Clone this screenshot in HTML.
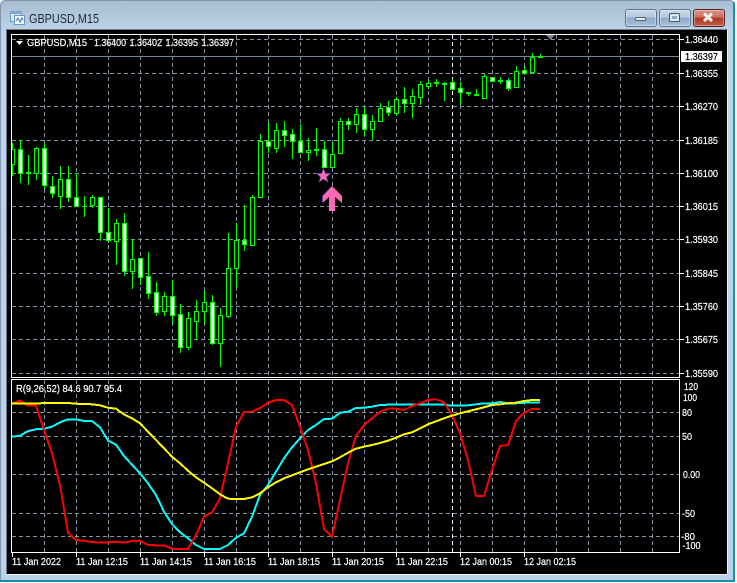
<!DOCTYPE html>
<html><head><meta charset="utf-8"><title>GBPUSD,M15</title>
<style>
html,body{margin:0;padding:0;background:#fff;width:737px;height:583px;overflow:hidden}
#win{position:absolute;left:0;top:0;width:735px;height:582px;background:linear-gradient(180deg,#a6bbd0 0,#b4cadf 18px,#bdd3ea 32px,#bad2ea 100%);border-radius:5px 5px 0 0;box-shadow:inset 0 0 0 1px #7f97ad}
#bot{position:absolute;left:0;top:580px;width:735px;height:2px;background:#1f8f9f}
#rgt{position:absolute;left:733px;top:2px;width:2px;height:580px;background:#1f8f9f}
#in{position:absolute;left:7px;top:30px;width:721px;height:545px;background:#000;box-shadow:inset -1px -1px 0 0 #f2f4f6,-1px -1px 0 0 #6d7a86}
.b{position:absolute;top:9px;height:16px;width:30px;border:1px solid #5d7690;border-radius:3px;background:linear-gradient(180deg,#c9d9e9 0,#b3c8dd 45%,#8fa9c4 50%,#a8c1da 100%);box-shadow:inset 0 0 0 1px rgba(255,255,255,.35)}
#c{background:linear-gradient(180deg,#d8948a 0,#c86f60 45%,#ad3a28 50%,#c05a46 100%);border-color:#5a2020}
svg{position:absolute;left:0;top:0}
</style></head><body>
<div id="win"></div><div id="bot"></div><div id="rgt"></div><div id="in"></div>
<div class="b" style="left:625px"></div>
<div class="b" style="left:659px"></div>
<div class="b" id="c" style="left:693px;width:30px"></div>
<svg width="737" height="583" viewBox="0 0 737 583" font-family="'Liberation Sans',sans-serif">
<!-- title icon -->
<g shape-rendering="crispEdges">
<rect x="10.5" y="11.5" width="11" height="10" fill="#dce9f6" stroke="#6f93bd"/>
<rect x="10" y="11" width="12" height="3" fill="#7fa6d2"/>
<rect x="14.5" y="15.5" width="10" height="9" fill="#f3f8fd" stroke="#6f93bd"/>
</g>
<path d="M16 21l2-3 2 4 2-4 1 2" fill="none" stroke="#3f74b5" stroke-width="1"/>
<text x="29" y="23" font-size="12.5" fill="#1c2a38" textLength="70" lengthAdjust="spacingAndGlyphs">GBPUSD,M15</text>
<!-- window buttons -->
<rect x="635.5" y="17.5" width="10" height="3" rx="1" fill="#e8eef4" stroke="#4f6478"/>
<rect x="669.5" y="13.5" width="10" height="8" rx="1" fill="#dfe7ef" stroke="#44586c"/>
<rect x="672" y="16" width="5" height="3" fill="#8fa9c4"/>
<path d="M704 13.5l8 7.5M712 13.5l-8 7.5" stroke="#f4f0ee" stroke-width="3"/>
<!-- grid -->
<g shape-rendering="crispEdges" fill="none" stroke-width="1">
<path stroke="#8494a6" stroke-dasharray="4 3" d="M12 39.5H679M12 73.5H679M12 106.5H679M12 140.5H679M12 173.5H679M12 206.5H679M12 239.5H679M12 273.5H679M12 306.5H679M12 339.5H679M12 373.5H679M12 412.5H679M12 436.5H679M12 474.5H679M12 513.5H679M12 536.5H679"/>
<path stroke="#8494a6" stroke-dasharray="4 3" d="M44.5 35V377M76.5 35V377M108.5 35V377M140.5 35V377M172.5 35V377M204.5 35V377M236.5 35V377M268.5 35V377M300.5 35V377M332.5 35V377M364.5 35V377M396.5 35V377M428.5 35V377M460.5 35V377M492.5 35V377M524.5 35V377M556.5 35V377M588.5 35V377M620.5 35V377M652.5 35V377M44.5 380V552M76.5 380V552M108.5 380V552M140.5 380V552M172.5 380V552M204.5 380V552M236.5 380V552M268.5 380V552M300.5 380V552M332.5 380V552M364.5 380V552M396.5 380V552M428.5 380V552M460.5 380V552M492.5 380V552M524.5 380V552M556.5 380V552M588.5 380V552M620.5 380V552M652.5 380V552"/>
<path stroke="#fff" stroke-dasharray="4 3" d="M452.5 35V377M452.5 380V552"/>
<path stroke="#778899" d="M12 56.5H679"/>
<!-- wicks -->
<path stroke="#00ff00" d="M12.5 143V176M20.5 140V183M28.5 155V185M36.5 147V180M44.5 143V189M52.5 176V198M60.5 166V209M68.5 166V202M76.5 173V206M84.5 196V217M92.5 195V208M100.5 197V241M108.5 208V243M116.5 219V265M124.5 213V276M132.5 239V289M140.5 258V285M148.5 252V299M156.5 282V316M164.5 292V316M172.5 280V324M180.5 304V353M188.5 312V350M196.5 300V340M204.5 291V324M212.5 295V345M220.5 308V367M228.5 233V318M236.5 223V288M244.5 205V251M252.5 195V245M260.5 134V197M268.5 123V153M276.5 123V153M284.5 121V147M292.5 129V159M300.5 124V153M308.5 138V161M316.5 128V156M324.5 141V168M332.5 142V168M340.5 118V153M348.5 118V130M356.5 108V133M364.5 107V136M372.5 115V140M380.5 103V121M388.5 101V116M396.5 97V116M404.5 87V113M412.5 89V118M420.5 81V105M428.5 80V89M436.5 79V87M444.5 82V101M452.5 79V89M460.5 82V105M468.5 92V96M476.5 89V95M484.5 74V98M492.5 77V82M500.5 77V84M508.5 78V91M516.5 66V88M524.5 67V75M532.5 53V72M540.5 54V58"/>
<!-- white bodies -->
<path stroke="#00ff00" fill="#fff" d="M18.5 149.5h4v24h-4zM42.5 148.5h4v37h-4zM50.5 186.5h4v7h-4zM66.5 179.5h4v18h-4zM74.5 197.5h4v9h-4zM98.5 197.5h4v35h-4zM106.5 232.5h4v8h-4zM122.5 223.5h4v48h-4zM138.5 258.5h4v19h-4zM146.5 276.5h4v17h-4zM154.5 292.5h4v20h-4zM170.5 296.5h4v19h-4zM178.5 314.5h4v33h-4zM210.5 302.5h4v41h-4zM242.5 240.5h4v4h-4zM266.5 141.5h4v5h-4zM282.5 130.5h4v5h-4zM290.5 134.5h4v7h-4zM298.5 141.5h4v11h-4zM322.5 149.5h4v18h-4zM346.5 121.5h4v3h-4zM362.5 114.5h4v15h-4zM386.5 107.5h4v5h-4zM402.5 99.5h4v4h-4zM450.5 82.5h4v7h-4zM458.5 88.5h4v4h-4zM490.5 77.5h4v4h-4zM506.5 80.5h4v8h-4zM522.5 70.5h4v3h-4z"/>
<!-- hollow bodies -->
<path stroke="#00ff00" fill="#000" d="M12 149.5h2.5v15H12M34.5 148.5h4v25h-4zM58.5 179.5h4v17h-4zM90.5 197.5h4v8h-4zM114.5 223.5h4v18h-4zM130.5 259.5h4v12h-4zM162.5 296.5h4v15h-4zM186.5 318.5h4v29h-4zM194.5 311.5h4v10h-4zM202.5 302.5h4v9h-4zM218.5 315.5h4v28h-4zM226.5 268.5h4v48h-4zM234.5 240.5h4v28h-4zM250.5 197.5h4v48h-4zM258.5 141.5h4v56h-4zM274.5 130.5h4v18h-4zM306.5 150.5h4v2h-4zM330.5 154.5h4v13h-4zM338.5 121.5h4v32h-4zM354.5 114.5h4v10h-4zM370.5 121.5h4v8h-4zM378.5 108.5h4v13h-4zM394.5 99.5h4v14h-4zM410.5 96.5h4v7h-4zM418.5 84.5h4v13h-4zM426.5 83.5h4v3h-4zM482.5 76.5h4v22h-4zM514.5 71.5h4v16h-4zM530.5 57.5h4v15h-4z"/>
<!-- doji -->
<path fill="#00ff00" d="M26 172h5v2h-5zM82 206h5v1h-5zM314 149h5v2h-5zM434 82h5v2h-5zM442 83h5v2h-5zM466 92h5v2h-5zM474 94h5v2h-5zM498 80h5v2h-5zM538 56h5v2h-5z"/>
<!-- frames -->
<rect x="11.5" y="34.5" width="668" height="343" stroke="#fff"/>
<rect x="11.5" y="379.5" width="668" height="173" stroke="#fff"/>
<!-- ticks -->
<path stroke="#fff" d="M680 39.5h4M680 73.5h4M680 106.5h4M680 140.5h4M680 173.5h4M680 206.5h4M680 239.5h4M680 273.5h4M680 306.5h4M680 339.5h4M680 373.5h4M12.5 553v4M76.5 553v4M140.5 553v4M204.5 553v4M268.5 553v4M332.5 553v4M396.5 553v4M460.5 553v4M524.5 553v4"/>
<rect x="681" y="51" width="41" height="11" fill="#fff" stroke="none"/>
</g>
<polygon points="546,35 555,35 550.5,40" fill="#808080"/>
<polygon points="16,41 23,41 19.5,45" fill="#fff"/>
<!-- signals -->
<polygon points="323.5,168.5 325.5,173.5 330.5,173.5 326.5,177 328,182 323.5,179 319,182 320.5,177 316.5,173.5 321.5,173.5" fill="#ff69b4" stroke="#5a3ca8" stroke-width=".7"/>
<polygon points="332,186 342,196 342,203 335,197 335,211 329,211 329,197 322.5,203 322.5,196" fill="#ff69b4"/>
<path d="M332 186L322.5 196V203" fill="none" stroke="#5a3ca8" stroke-width=".8"/>
<!-- indicator lines -->
<g fill="none" stroke-width="2" shape-rendering="crispEdges" stroke-linejoin="round">
<polyline stroke="#00ffff" points="12,436.7 20,435.7 28,431 36,429.3 44,428.7 52,426.7 60,422.3 68,419.3 76,419.3 84,421 92,421 100,427.3 108,440.7 116,444.7 124,456 132,464.7 140,473.3 148,483.3 156,495 164,511.7 172,524 180,532.3 188,538.3 196,545 204,549 212,549 220,549 228,545 236,537.7 244,533.3 252,516.7 260,495 268,485 276,471.7 284,458.3 292,447.3 300,438.3 308,430 316,425 324,419 332,418.7 340,412.7 348,411.7 356,408 364,407.7 372,406.7 380,405 388,404.7 396,404.7 404,404.7 412,404.3 420,404.3 428,404.7 436,404.7 444,404.7 452,405.7 460,405.7 468,405.3 476,404.3 484,403.3 492,403.3 500,402 508,403.3 516,403.3 524,402.7 532,402.7 540,402.7"/>
<polyline stroke="#ff0000" points="12,403.3 20,400.7 28,405.7 36,405.7 44,430 52,453 60,485 68,532.7 76,540 84,540.7 92,542 100,542.7 108,542.3 116,541.7 124,542.7 132,541 140,540.7 148,545 156,545.3 164,545.3 172,548.7 180,549 188,549 196,535 204,516.7 212,512.3 220,498.3 228,463.3 236,426.7 244,412 252,411.7 260,408.3 268,402.7 276,400 284,400 292,405 300,426.7 308,450 316,483.3 324,529 332,536.7 340,500 348,463.3 356,435.7 364,425 372,418.3 380,411.7 388,408.7 396,408.7 404,410 412,406 420,403.3 428,400 436,399.3 444,402.3 452,415 460,433.3 468,460 476,496 484,496 492,470 500,446 508,445 516,421 524,412.7 532,409 540,409"/>
<polyline stroke="#ffff00" points="12,403.7 20,403.7 28,403.7 36,403.7 44,403 52,403 60,403 68,403 76,403.7 84,404 92,404.3 100,405.3 108,407.7 116,408.7 124,414.3 132,418.3 140,423.3 148,431.7 156,440 164,448.3 172,456.7 180,463.3 188,470.7 196,477.3 204,482.7 212,488.3 220,494.3 228,498.7 236,499 244,499 252,497.3 260,493.3 268,487.3 276,482.3 284,478.3 292,475.3 300,472.3 308,469.3 316,466.7 324,464 332,461.3 340,457.3 348,452.7 356,448.7 364,446.7 372,445 380,443 388,440.7 396,437.7 404,434.3 412,432.3 420,428.3 428,424.3 436,421.3 444,418.3 452,415.7 460,413.3 468,411.3 476,409.3 484,407.3 492,405 500,404.3 508,403.3 516,402.7 524,401 532,400 540,400"/>
</g>
<!-- texts -->
<g font-size="10.5" fill="#fff" stroke="#fff" stroke-width=".2">
<text x="27" y="46" textLength="60" lengthAdjust="spacingAndGlyphs">GBPUSD,M15</text>
<text x="94" y="46" textLength="32" lengthAdjust="spacingAndGlyphs">1.36400</text>
<text x="129.5" y="46" textLength="32.5" lengthAdjust="spacingAndGlyphs">1.36402</text>
<text x="165.5" y="46" textLength="32.5" lengthAdjust="spacingAndGlyphs">1.36395</text>
<text x="201.5" y="46" textLength="32.5" lengthAdjust="spacingAndGlyphs">1.36397</text>
<text x="16" y="392" textLength="106" lengthAdjust="spacingAndGlyphs">R(9,26,52) 84.6 90.7 95.4</text>
<text x="685" y="43" textLength="33" lengthAdjust="spacingAndGlyphs">1.36440</text>
<text x="685" y="60" textLength="33" lengthAdjust="spacingAndGlyphs" fill="#000" stroke="#000">1.36397</text>
<text x="685" y="77" textLength="33" lengthAdjust="spacingAndGlyphs">1.36355</text>
<text x="685" y="110" textLength="33" lengthAdjust="spacingAndGlyphs">1.36270</text>
<text x="685" y="144" textLength="33" lengthAdjust="spacingAndGlyphs">1.36185</text>
<text x="685" y="177" textLength="33" lengthAdjust="spacingAndGlyphs">1.36100</text>
<text x="685" y="210" textLength="33" lengthAdjust="spacingAndGlyphs">1.36015</text>
<text x="685" y="243" textLength="33" lengthAdjust="spacingAndGlyphs">1.35930</text>
<text x="685" y="277" textLength="33" lengthAdjust="spacingAndGlyphs">1.35845</text>
<text x="685" y="310" textLength="33" lengthAdjust="spacingAndGlyphs">1.35760</text>
<text x="685" y="343" textLength="33" lengthAdjust="spacingAndGlyphs">1.35675</text>
<text x="685" y="377" textLength="33" lengthAdjust="spacingAndGlyphs">1.35590</text>
<text x="684" y="390" textLength="14" lengthAdjust="spacingAndGlyphs">120</text>
<text x="683" y="401" textLength="14" lengthAdjust="spacingAndGlyphs">100</text>
<text x="682" y="416" textLength="10" lengthAdjust="spacingAndGlyphs">80</text>
<text x="682" y="440" textLength="10" lengthAdjust="spacingAndGlyphs">50</text>
<text x="683" y="478" textLength="17" lengthAdjust="spacingAndGlyphs">0.00</text>
<text x="682" y="517" textLength="13" lengthAdjust="spacingAndGlyphs">-50</text>
<text x="681" y="540" textLength="14" lengthAdjust="spacingAndGlyphs">-80</text>
<text x="682.5" y="549" textLength="18" lengthAdjust="spacingAndGlyphs">-100</text>
<text x="12" y="565" textLength="49" lengthAdjust="spacingAndGlyphs">11 Jan 2022</text>
<text x="76" y="565" textLength="52" lengthAdjust="spacingAndGlyphs">11 Jan 12:15</text>
<text x="140" y="565" textLength="52" lengthAdjust="spacingAndGlyphs">11 Jan 14:15</text>
<text x="204" y="565" textLength="52" lengthAdjust="spacingAndGlyphs">11 Jan 16:15</text>
<text x="268" y="565" textLength="52" lengthAdjust="spacingAndGlyphs">11 Jan 18:15</text>
<text x="332" y="565" textLength="52" lengthAdjust="spacingAndGlyphs">11 Jan 20:15</text>
<text x="396" y="565" textLength="52" lengthAdjust="spacingAndGlyphs">11 Jan 22:15</text>
<text x="460" y="565" textLength="52" lengthAdjust="spacingAndGlyphs">12 Jan 00:15</text>
<text x="524" y="565" textLength="52" lengthAdjust="spacingAndGlyphs">12 Jan 02:15</text>
</g>
</svg>
</body></html>
